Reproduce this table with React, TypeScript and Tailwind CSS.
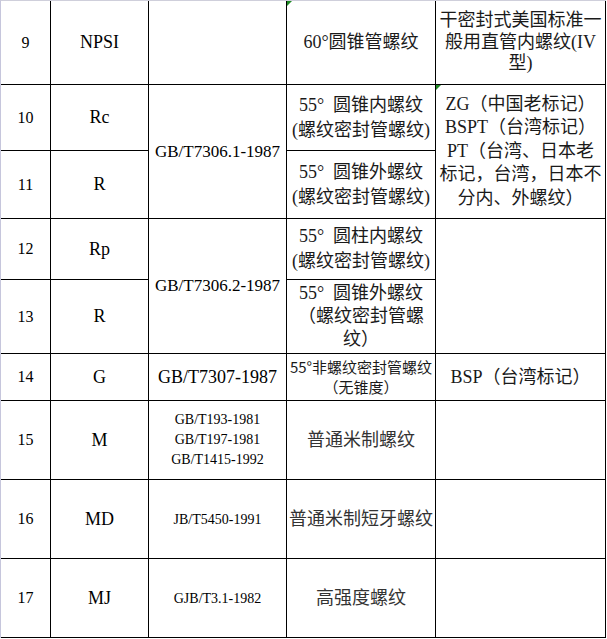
import { ReactNode } from "react";

type CellProps = {
  children?: ReactNode;
  className?: string;
  mark?: boolean;
};

function Cell({ children, className = "", mark }: CellProps) {
  return (
    <div className={`relative flex items-center justify-center bg-white text-center ${className}`}>
      {mark && (
        <span className="absolute left-0 top-0 h-0 w-0 border-r-[5px] border-t-[5px] border-r-transparent border-t-[#1f8a24]" />
      )}
      <div>{children}</div>
    </div>
  );
}

const num = "text-[16px] text-black";
const code = "text-[18px] text-black";
const std = "text-[17px] text-black";
const cn = "text-[18px] leading-[25px] text-[#1a1a1a]";
const cnGray = "text-[18px] text-[#333]";

export default function App() {
  return (
    <div className="min-h-screen bg-white font-['Liberation_Serif','Noto_Sans_CJK_SC',serif]">
      <div className="grid w-fit grid-cols-[49px_97px_137px_148px_169px] grid-rows-[83px_65px_67px_60px_73px_46px_78px_78px_78px] gap-px border-l border-t border-l-[#c6c6dc] border-t-[#cfcfdb] bg-black pb-px pr-px">
        {/* 9 */}
        <Cell className={num}>9</Cell>
        <Cell className={code}>NPSI</Cell>
        <Cell />
        <Cell className={cn} mark>60°圆锥管螺纹</Cell>
        <Cell className="text-[18px] leading-[21.5px] text-[#1a1a1a]">
          干密封式美国标准一<br />般用直管内螺纹(IV<br />型)
        </Cell>

        {/* 10 / 11 */}
        <Cell className={num}>10</Cell>
        <Cell className={code}>Rc</Cell>
        <Cell className={`row-span-2 ${std}`}>GB/T7306.1-1987</Cell>
        <Cell className={cn}>
          55°&ensp;圆锥内螺纹<br />(螺纹密封管螺纹)
        </Cell>
        <Cell className="row-span-2 text-[18px] leading-[23.5px] text-[#1a1a1a]" mark>
          ZG（中国老标记）<br />BSPT（台湾标记）<br />PT（台湾、日本老<br />标记，台湾，日本不<br />分内、外螺纹）
        </Cell>
        <Cell className={num}>11</Cell>
        <Cell className={code}>R</Cell>
        <Cell className={cn}>
          55°&ensp;圆锥外螺纹<br />(螺纹密封管螺纹)
        </Cell>

        {/* 12 / 13 */}
        <Cell className={num}>12</Cell>
        <Cell className={code}>Rp</Cell>
        <Cell className={`row-span-2 ${std}`}>GB/T7306.2-1987</Cell>
        <Cell className={cn}>
          55°&ensp;圆柱内螺纹<br />(螺纹密封管螺纹)
        </Cell>
        <Cell className="row-span-2" />
        <Cell className={num}>13</Cell>
        <Cell className={code}>R</Cell>
        <Cell className="text-[18px] leading-[23px] text-[#1a1a1a]">
          55°&ensp;圆锥外螺纹<br />（螺纹密封管螺<br />纹）
        </Cell>

        {/* 14 */}
        <Cell className={num}>14</Cell>
        <Cell className={code}>G</Cell>
        <Cell className="text-[18px] text-black">GB/T7307-1987</Cell>
        <Cell className="text-[15px] leading-[20px] text-[#1a1a1a] font-['Noto_Sans_CJK_SC',sans-serif]">
          55°非螺纹密封管螺纹<br />（无锥度）
        </Cell>
        <Cell className="text-[18px] text-[#1a1a1a]">BSP（台湾标记）</Cell>

        {/* 15 */}
        <Cell className={num}>15</Cell>
        <Cell className={code}>M</Cell>
        <Cell className="text-[14px] leading-[20px] text-black">
          GB/T193-1981<br />GB/T197-1981<br />GB/T1415-1992
        </Cell>
        <Cell className={cnGray}>普通米制螺纹</Cell>
        <Cell />

        {/* 16 */}
        <Cell className={num}>16</Cell>
        <Cell className={code}>MD</Cell>
        <Cell className="text-[14px] text-black">JB/T5450-1991</Cell>
        <Cell className={cnGray}>普通米制短牙螺纹</Cell>
        <Cell />

        {/* 17 */}
        <Cell className={num}>17</Cell>
        <Cell className={code}>MJ</Cell>
        <Cell className="text-[14px] text-black">GJB/T3.1-1982</Cell>
        <Cell className={cnGray}>高强度螺纹</Cell>
        <Cell />
      </div>
    </div>
  );
}
